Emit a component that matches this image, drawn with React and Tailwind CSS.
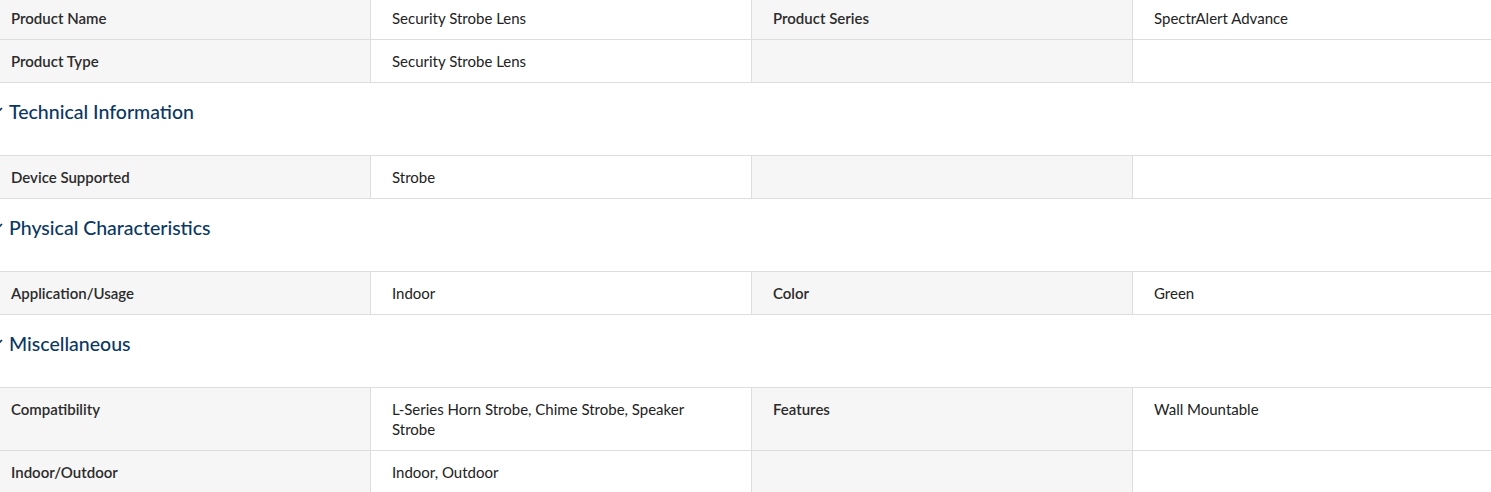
import React from 'react';

const sections = [
  {
    title: null,
    rows: [
      [['Product Name', 'Security Strobe Lens'], ['Product Series', 'SpectrAlert Advance']],
      [['Product Type', 'Security Strobe Lens'], ['', '']],
    ],
  },
  {
    title: 'Technical Information',
    rows: [[['Device Supported', 'Strobe'], ['', '']]],
  },
  {
    title: 'Physical Characteristics',
    rows: [[['Application/Usage', 'Indoor'], ['Color', 'Green']]],
  },
  {
    title: 'Miscellaneous',
    rows: [
      [['Compatibility', 'L-Series Horn Strobe, Chime Strobe, Speaker Strobe'], ['Features', 'Wall Mountable']],
      [['Indoor/Outdoor', 'Indoor, Outdoor'], ['', '']],
    ],
  },
];

function Chevron() {
  return (
    <svg width="14" height="14" viewBox="0 0 14 14" className="shrink-0">
      <path d="M2 5l5 5 5-5" fill="none" stroke="#0b3a6a" strokeWidth="1.6" />
    </svg>
  );
}

function Row({ cells }) {
  return (
    <div className="grid grid-cols-[381px_381px_381px_381px] border-b border-[#dddddd] text-[15px] leading-[20px] text-[#222222]">
      {cells.map(([label, value], i) => (
        <React.Fragment key={i}>
          <div className="bg-[#f6f6f6] border-r border-[#dddddd] px-[21px] py-[11px] font-semibold text-[#2b2b2b]">{label}</div>
          <div className="border-r border-[#dddddd] px-[21px] py-[11px] pr-[40px]">{value}</div>
        </React.Fragment>
      ))}
    </div>
  );
}

export default function App() {
  return (
    <div className="w-[1491px] h-[492px] overflow-hidden bg-white" style={{ fontFamily: 'Lato, "Noto Sans", sans-serif' }}>
      <div className="w-[1524px] -ml-[10px] -mt-[4px]">
        {sections.map((s, si) => (
          <div key={si}>
            {s.title && (
              <div className="h-[73px] flex items-start gap-[5px] pt-[17px] border-b border-[#dddddd]">
                <div className="pt-[3px]"><Chevron /></div>
                <h3 className="text-[19.5px] leading-[24px] text-[#0a3764] font-medium">{s.title}</h3>
              </div>
            )}
            <div className={s.title ? '' : 'border-t border-[#dddddd]'}>
              {s.rows.map((r, ri) => (
                <Row key={ri} cells={r} />
              ))}
            </div>
          </div>
        ))}
      </div>
    </div>
  );
}
